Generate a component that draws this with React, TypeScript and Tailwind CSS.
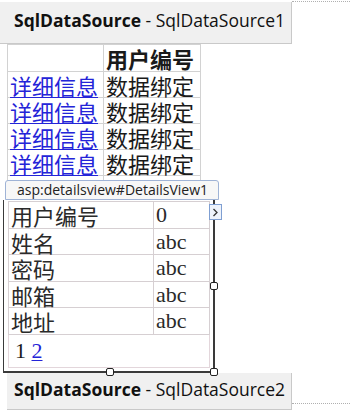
import React from "react";

const cjk = { fontFamily: '"Noto Sans CJK SC", "Noto Sans", sans-serif' };
const ui = { fontFamily: '"Open Sans", "Noto Sans", sans-serif' };
const serif = { fontFamily: '"Liberation Serif", "Noto Sans CJK SC", serif' };

function Handle({ className }: { className: string }) {
  return (
    <div
      className={`absolute w-[8px] h-[8px] rounded-[2px] border border-[#222] bg-white ${className}`}
    />
  );
}

export default function App() {
  const rows = [0, 1, 2, 3, 4];
  const details: [string, string][] = [
    ["用户编号", "0"],
    ["姓名", "abc"],
    ["密码", "abc"],
    ["邮箱", "abc"],
    ["地址", "abc"],
  ];
  return (
    <div className="w-[350px] h-[412px] bg-white overflow-hidden flex flex-col items-start text-[#1a1a1a]">
      {/* top SqlDataSource */}
      <div className="flex items-start w-full">
        <div
          className="mt-[2px] w-[292px] h-[42px] bg-[#f0f0f0] border-r border-b border-[#c9c9c9] pl-[14px] pt-[7px] text-[17.5px] leading-[22px] text-[#111] whitespace-nowrap"
          style={ui}
        >
          <span className="font-bold">SqlDataSource</span> - SqlDataSource1
        </div>
        <div className="flex-1 mt-[1px] border-t border-dotted border-[#b0b0b0]" />
      </div>

      {/* GridView */}
      <table className="ml-[7px] w-[193px] table-fixed border-collapse text-[22px] leading-none" style={cjk}>
        <tbody>
          <tr className="h-[27px]">
            <td className="w-[96px] border border-[#d2d2d2] p-0" />
            <td className="w-[97px] border border-[#d2d2d2] p-0 pl-[2px] font-bold whitespace-nowrap">用户编号</td>
          </tr>
          {rows.map((r) => (
            <tr key={r} className="h-[26px]">
              <td className="border border-[#d2d2d2] p-0 pl-[2px] whitespace-nowrap">
                <span className="text-[#2424d8] underline decoration-1 underline-offset-2">详细信息</span>
              </td>
              <td className="border border-[#d2d2d2] p-0 pl-[2px] whitespace-nowrap">数据绑定</td>
            </tr>
          ))}
        </tbody>
      </table>

      {/* DetailsView */}
      <div className="relative z-10 mt-[-22px] w-[230px]">
        <div
          className="ml-[5px] w-[214px] h-[20px] rounded-t-[3px] border border-[#9fb3d6] bg-[#f7f7f7] pl-[11px] text-[14px] leading-[18px] text-[#222] whitespace-nowrap"
          style={ui}
        >
          asp:detailsview#DetailsView1
        </div>
        <div className="relative ml-[3px] w-[212px] border-l border-b-2 border-r-2 border-[#3a3a3a] bg-white pl-[4px] pt-[1px] pb-[3px]">
          <table className="w-[201px] table-fixed border-collapse text-[22px] leading-none">
            <tbody>
              {details.map(([k, v], i) => (
                <tr key={k} className={i % 2 === 0 ? "h-[27px]" : "h-[26px]"}>
                  <td className="w-[145px] border border-[#d6cfd2] p-0 pl-[2px] text-[#2a2a2a] whitespace-nowrap" style={cjk}>
                    {k}
                  </td>
                  <td className="w-[56px] border border-[#d6cfd2] p-0 pl-[2px] text-[#2a2a2a]" style={serif}>
                    {v}
                  </td>
                </tr>
              ))}
              <tr className="h-[33px]">
                <td colSpan={2} className="border border-[#e3d6db] p-0 pl-[6px] text-[22px]" style={serif}>
                  <span>1</span>{" "}
                  <span className="text-[#2424d8] underline decoration-1 underline-offset-2">2</span>
                </td>
              </tr>
            </tbody>
          </table>
          {/* smart tag arrow */}
          <div className="absolute left-[205px] top-[4px] w-[13px] h-[16px] border border-[#7f9fd2] bg-[#eef3fb] flex items-center justify-center">
            <svg width="7" height="9" viewBox="0 0 7 9">
              <path d="M1.5 1 L5 4.5 L1.5 8" fill="none" stroke="#333" strokeWidth="1.3" />
            </svg>
          </div>
          <Handle className="left-[206px] top-[82px]" />
          <Handle className="left-[102px] bottom-[-5px]" />
          <Handle className="left-[206px] bottom-[-5px]" />
        </div>
      </div>

      {/* bottom SqlDataSource */}
      <div className="flex items-end w-full">
        <div
          className="ml-[7px] w-[285px] h-[37px] bg-[#f0f0f0] border-r border-b border-[#c9c9c9] pl-[7px] pt-[5px] text-[17.5px] leading-[22px] text-[#111] whitespace-nowrap"
          style={ui}
        >
          <span className="font-bold">SqlDataSource</span> - SqlDataSource2
        </div>
        <div className="flex-1 mb-[6px] border-t border-dotted border-[#b0b0b0]" />
      </div>
    </div>
  );
}
